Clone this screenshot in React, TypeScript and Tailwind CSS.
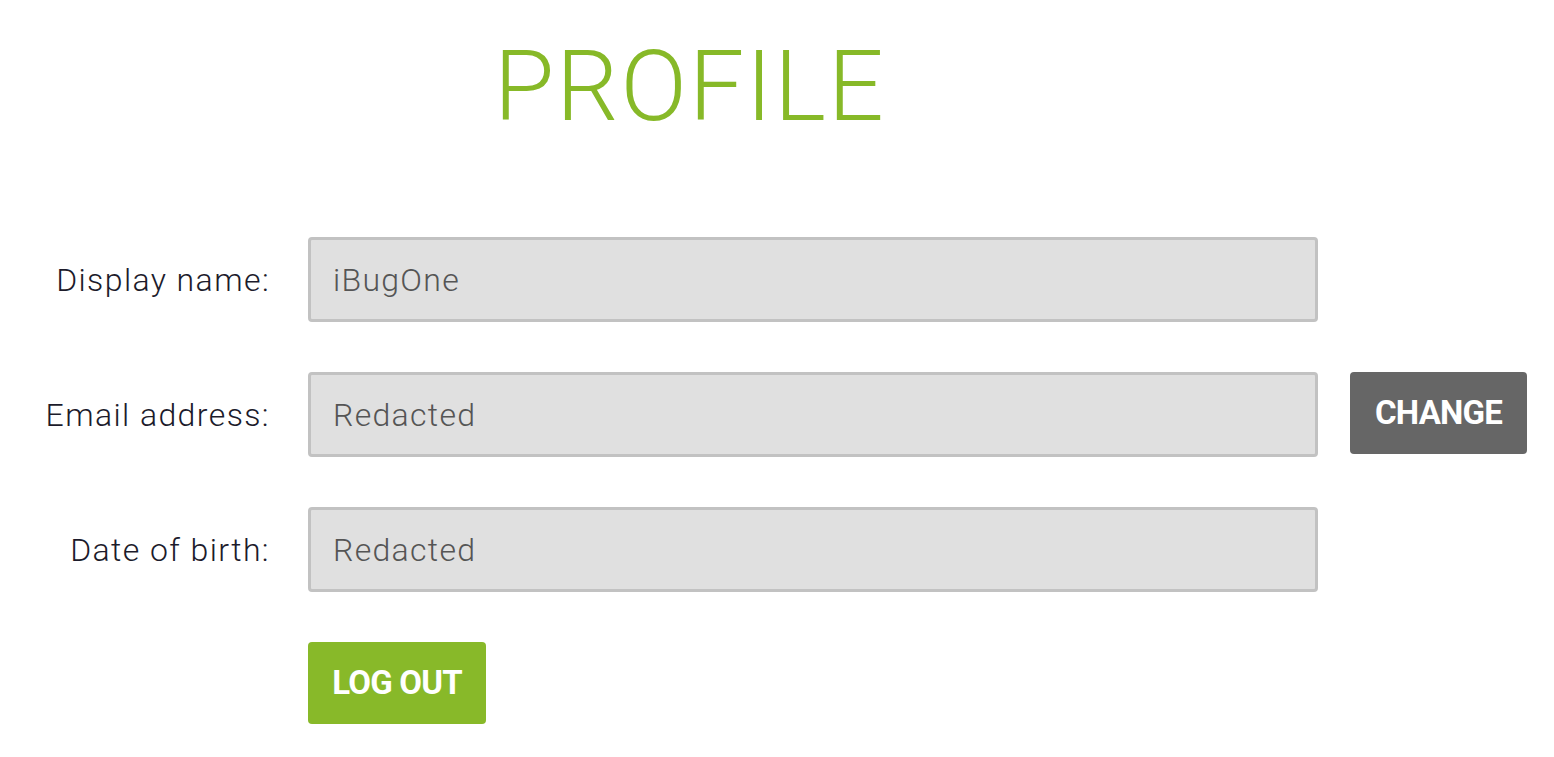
import { useState } from 'react';

const rows = [
  { label: 'Display name:', value: 'iBugOne', action: false },
  { label: 'Email address:', value: 'Redacted', action: true },
  { label: 'Date of birth:', value: 'Redacted', action: false },
];

export default function App() {
  const [values, setValues] = useState(rows.map((r) => r.value));

  return (
    <div className="min-h-[757px] w-[1554px] bg-white font-['Roboto',sans-serif]">
      {/* Title */}
      <div className="pl-[494px] pt-[27px]">
        <h1 className="text-[98px] leading-[120px] font-light text-[#87b928] tracking-[2px]">PROFILE</h1>
      </div>

      {/* Fields */}
      <div className="mt-[90px] flex flex-col gap-[50px]">
        {rows.map((r, i) => (
          <div key={r.label} className="flex items-center">
            <label className="w-[270px] text-right text-[32px] font-light text-[#1c1b2b] tracking-[1.4px]">
              {r.label}
            </label>
            <input
              className="ml-[38px] h-[85px] w-[1010px] rounded-[4px] border-[3px] border-[#c2c2c2] bg-[#e0e0e0] px-[22px] text-[32px] font-light text-[#555] tracking-[1.3px] outline-none"
              value={values[i]}
              onChange={(e) => setValues(values.map((v, j) => (j === i ? e.target.value : v)))}
            />
            {r.action && (
              <button className="ml-[32px] h-[82px] w-[177px] self-start rounded-[4px] bg-[#666666] text-[33px] font-bold text-white tracking-[-0.8px]">
                CHANGE
              </button>
            )}
          </div>
        ))}
      </div>

      {/* Log out */}
      <div className="mt-[50px] pl-[308px]">
        <button className="h-[82px] w-[178px] rounded-[4px] bg-[#88b929] text-[33px] font-bold text-white tracking-[-0.8px]">
          LOG OUT
        </button>
      </div>
    </div>
  );
}
